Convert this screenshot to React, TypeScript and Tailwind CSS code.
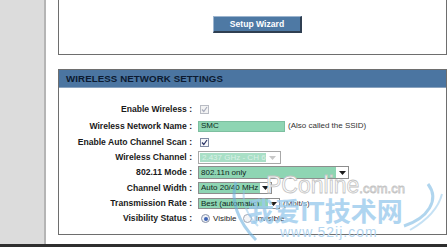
import React from "react";

const font = { fontFamily: '"Liberation Sans", Arial, sans-serif' };

function Check({ disabled }: { disabled?: boolean }) {
  return (
    <div
      className={
        "w-[9px] h-[9px] border flex items-center justify-center " +
        (disabled ? "border-[#b9bcc4] bg-[#f3f3f3]" : "border-[#7f8aa3] bg-[#f6f7fa]")
      }
    >
      <svg width="7" height="7" viewBox="0 0 7 7">
        <path
          d="M1 3.5 L2.8 5.5 L6 1"
          fill="none"
          stroke={disabled ? "#a9adbd" : "#2b3566"}
          strokeWidth="1.2"
        />
      </svg>
    </div>
  );
}

function Arrow({ color }: { color: string }) {
  return (
    <svg width="7" height="4" viewBox="0 0 7 4">
      <path d="M0 0 H7 L3.5 4 Z" fill={color} />
    </svg>
  );
}

function Select({
  w,
  h,
  text,
  arrowW = 12,
}: {
  w: string;
  h: string;
  text: string;
  arrowW?: number;
}) {
  return (
    <div className={`${w} ${h} border border-[#8d8d8d] flex bg-white`}>
      <div className="flex-1 bg-[#8ed5b3] pl-[2px] flex items-center text-[8px] text-[#10261c] leading-none whitespace-nowrap overflow-hidden">
        {text}
      </div>
      <div className="flex items-center justify-center" style={{ width: arrowW }}>
        <Arrow color="#1a1a1a" />
      </div>
    </div>
  );
}

function Row({
  label,
  h,
  children,
}: {
  label: string;
  h: string;
  children?: React.ReactNode;
}) {
  return (
    <div className={`flex items-center ${h}`}>
      <div className="w-[133px] text-right font-bold text-[8.6px] text-[#1a1a1a] whitespace-nowrap leading-none">
        {label}
      </div>
      <div className="ml-[6px] flex items-center gap-[3px]">{children}</div>
    </div>
  );
}

export default function App() {
  return (
    <div
      className="w-[447px] h-[247px] overflow-hidden flex flex-col bg-white relative"
      style={font}
    >
      <div className="flex flex-1 min-h-0">
        <div className="w-[46px] bg-[#dcdcdc] border-r-2 border-[#b5b5b5]" />
        <div className="flex-1 pl-[12px] flex flex-col">
          {/* Top box */}
          <div className="h-[55px] border-l border-r border-b border-[#6e6e6e] flex flex-col">
            <div className="mt-[16px] pl-[154px]">
              <div className="w-[89px] h-[17px] bg-[#4e79a4] border-t border-l border-[#9db5cf] border-r-2 border-b-2 border-r-[#2f3f52] border-b-[#2f3f52] flex items-center justify-center">
                <span className="text-white font-bold text-[8.6px] leading-none">Setup Wizard</span>
              </div>
            </div>
          </div>

          <div className="h-[14px]" />

          {/* Wireless box */}
          <div className="h-[166px] border border-[#6e6e6e] flex flex-col">
            <div className="h-[18px] bg-[#4b75a1] border-b border-[#8aa3bf] flex items-center pl-[7px]">
              <span className="font-bold text-[9.7px] text-[#0c1a30] tracking-[0.1px] leading-none">
                WIRELESS NETWORK SETTINGS
              </span>
            </div>
            <div className="pt-[13px] flex flex-col">
              <Row label="Enable Wireless :" h="h-[17px]">
                <div className="ml-[2px]">
                  <Check disabled />
                </div>
              </Row>
              <Row label="Wireless Network Name :" h="h-[16px]">
                <div className="w-[87px] h-[11px] bg-[#8ed5b3] border border-[#7dbfa0] pl-[2px] flex items-center text-[8px] text-[#0d2a1c] leading-none">
                  SMC
                </div>
                <span className="text-[8px] text-[#333] leading-none whitespace-nowrap">
                  (Also called the SSID)
                </span>
              </Row>
              <Row label="Enable Auto Channel Scan :" h="h-[16px]">
                <div className="ml-[2px]">
                  <Check />
                </div>
              </Row>
              <Row label="Wireless Channel :" h="h-[15px]">
                <div className="w-[83px] h-[13px] border border-[#a8a8a8] flex p-[1px] bg-white">
                  <div className="w-[66px] bg-[#a9dfc6] pl-[2px] flex items-center text-[8px] text-[#d9f1e6] leading-none whitespace-nowrap overflow-hidden">
                    2.437 GHz - CH 6
                  </div>
                  <div className="flex-1 flex items-center justify-center">
                    <Arrow color="#c8c8c8" />
                  </div>
                </div>
              </Row>
              <Row label="802.11 Mode :" h="h-[15px]">
                <Select w="w-[151px]" h="h-[13px]" text="802.11n only" />
              </Row>
              <Row label="Channel Width :" h="h-[16px]">
                <Select w="w-[74px]" h="h-[12px]" text="Auto 20/40 MHz" arrowW={11} />
              </Row>
              <Row label="Transmission Rate :" h="h-[15px]">
                <Select w="w-[82px]" h="h-[11px]" text="Best (automatic)" arrowW={11} />
                <span className="text-[8px] text-[#333] leading-none whitespace-nowrap">(Mbit/s)</span>
              </Row>
              <Row label="Visibility Status :" h="h-[15px]">
                <div className="ml-[3px] w-[9px] h-[9px] rounded-full border border-[#8a93a8] bg-[#eef1f6] flex items-center justify-center">
                  <div className="w-[4px] h-[4px] rounded-full bg-[#3f64b5]" />
                </div>
                <span className="text-[8px] text-[#222] leading-none">Visible</span>
                <div className="ml-[4px] w-[9px] h-[9px] rounded-full border border-[#a0a6b3] bg-[#f4f5f7]" />
                <span className="text-[8px] text-[#222] leading-none">Invisible</span>
              </Row>
            </div>
          </div>
          <div className="flex-1" />
        </div>
      </div>
      <div className="h-[3px] bg-[#2e2e2e]" />

      {/* Watermark */}
      <div className="absolute left-[228px] top-[170px] w-[219px] h-[72px] pointer-events-none">
        <svg className="absolute left-0 top-0" width="219" height="72" viewBox="0 0 219 72">
          <path d="M8 12 C2 30 10 52 28 70" fill="none" stroke="#6fb2e0" strokeWidth="3" opacity="0.6" />
          <path d="M16 20 C14 34 20 46 30 56" fill="none" stroke="#8cc4ea" strokeWidth="2" opacity="0.5" />
          <path d="M200 14 C212 30 200 48 176 56" fill="none" stroke="#6fb2e0" strokeWidth="3" opacity="0.55" />
          <path d="M214 24 C210 40 196 52 182 60" fill="none" stroke="#8cc4ea" strokeWidth="2" opacity="0.5" />
        </svg>
        <div className="absolute left-[38px] top-[4px] whitespace-nowrap text-white [-webkit-text-stroke:0.8px_#c4c4c4] leading-none">
          <span className="text-[23px]">PConline</span>
          <span className="text-[13px]">.com.cn</span>
        </div>
        <div
          className="absolute left-[20px] top-[27px] whitespace-nowrap text-[26px] font-bold text-[#9ccbed] opacity-80 leading-none"
          style={{ fontFamily: '"Noto Sans CJK SC", sans-serif' }}
        >
          我爱IT技术网
        </div>
        <div className="absolute left-[52px] top-[55px] whitespace-nowrap text-[14px] tracking-[1px] text-[#b3d5ef] leading-none">
          www.52ij.com
        </div>
      </div>
    </div>
  );
}
